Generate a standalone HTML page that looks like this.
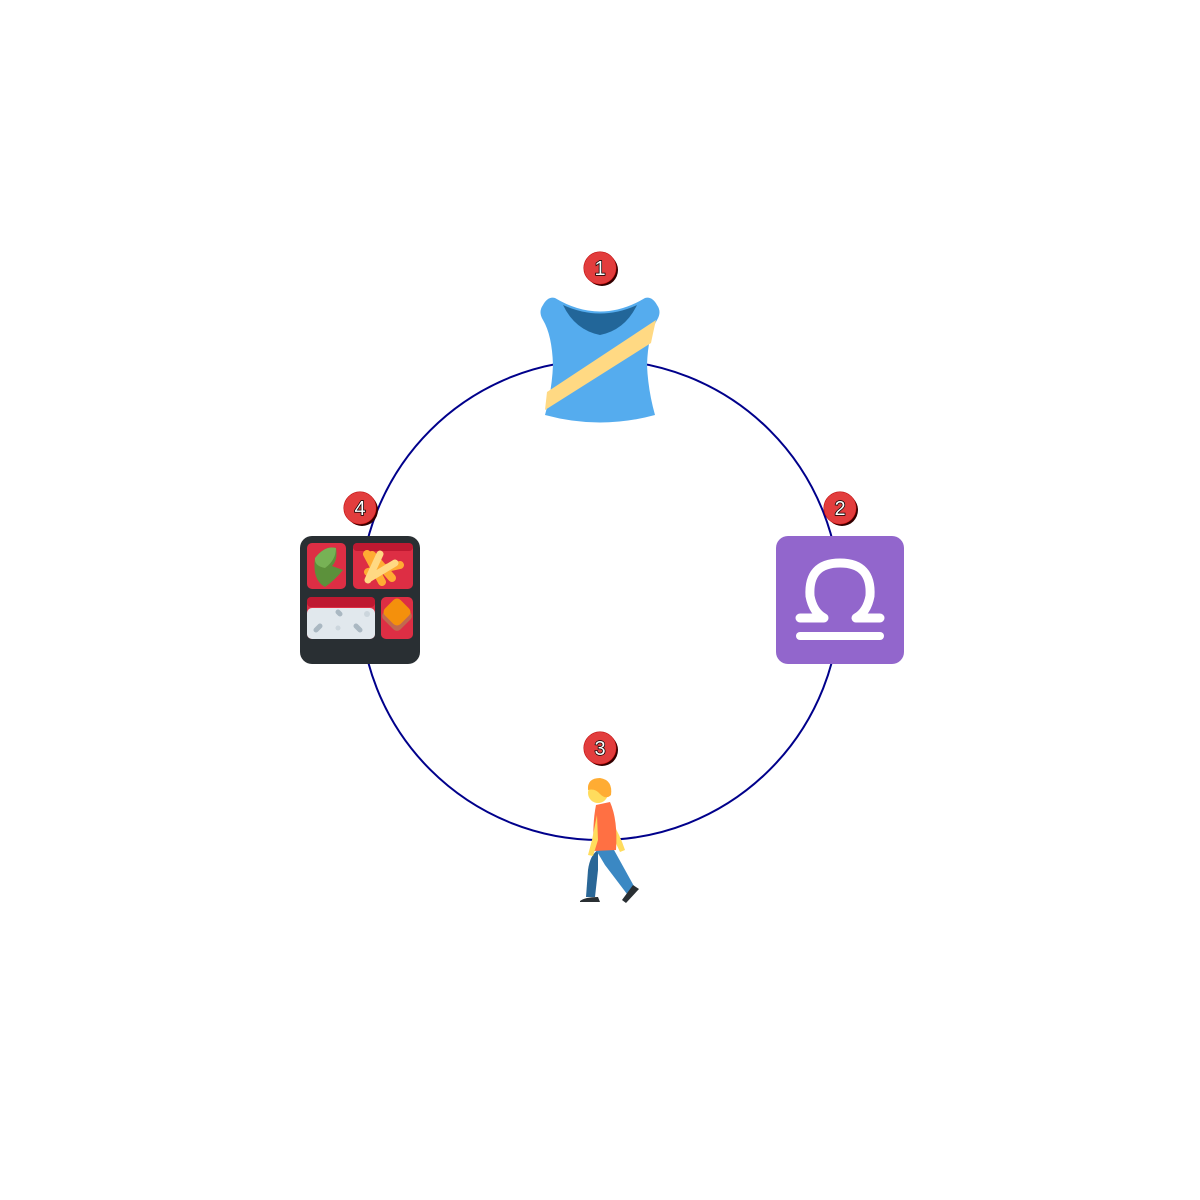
<!DOCTYPE html>
<html><head><style>html,body{margin:0;padding:0;background:#fff}svg{display:block}</style></head><body>
<svg width="1200" height="1200" viewBox="0 0 1200 1200" xmlns="http://www.w3.org/2000/svg">
<circle cx="600" cy="600" r="240" fill="none" stroke="#00008b" stroke-width="2"/>
<!-- shirt -->
<g>
<path d="M555 298 Q548 296 543 305 Q538 312 543 320 Q552 335 553 365 Q552 390 545 415 Q600 430 655 415 Q648 390 647 365 Q648 335 657 320 Q662 312 657 305 Q652 296 645 298 Q600 325 555 298Z" fill="#55acee"/>
<path d="M563 305 Q575 330 600 335 Q625 330 637 305 Q600 322 563 305Z" fill="#226699"/>
<path d="M547 392 L656 320 Q653 333 651 343 L545 410Z" fill="#ffd983"/>
</g>
<!-- libra -->
<rect x="776" y="536" width="128" height="128" rx="12" fill="#9266cc"/>
<path d="M800 618 L824 618 Q813 612 810 596 Q808 563 840 563 Q872 563 870 596 Q867 612 856 618 L880 618" fill="none" stroke="#fff" stroke-width="9" stroke-linejoin="round" stroke-linecap="round"/>
<path d="M800 636 L880 636" stroke="#fff" stroke-width="8" stroke-linecap="round"/>
<!-- bento -->
<rect x="300" y="536" width="120" height="128" rx="12" fill="#292f33"/>
<rect x="307" y="543" width="39" height="46" rx="5" fill="#dd2e44"/>
<rect x="353" y="543" width="60" height="46" rx="5" fill="#dd2e44"/>
<rect x="353" y="543" width="60" height="8" rx="4" fill="#be1931"/>
<rect x="307" y="597" width="68" height="42" rx="5" fill="#dd2e44"/>
<rect x="307" y="597" width="68" height="10" rx="4" fill="#be1931"/>
<rect x="381" y="597" width="32" height="42" rx="5" fill="#dd2e44"/>
<rect x="307" y="608" width="68" height="31" rx="5" fill="#e1e8ed"/>
<path d="M315 558 Q325 545 336 548 Q338 560 332 566 L343 570 Q335 580 325 587 Q312 580 315 558Z" fill="#5c913b"/>
<path d="M315 558 Q325 545 336 548 Q336 560 325 568 Q314 566 315 558Z" fill="#77b255"/>
<path d="M367 554 L382 582 M368 572 L400 565 M372 555 L392 578" stroke="#ffac33" stroke-width="8" stroke-linecap="round"/>
<path d="M380 554 L368 580 M370 578 L395 563" stroke="#ffd983" stroke-width="7" stroke-linecap="round"/>
<rect x="385" y="604" width="24" height="24" rx="5" transform="rotate(45 397 616)" fill="#c1694f"/>
<rect x="386" y="601" width="22" height="22" rx="5" transform="rotate(45 397 612)" fill="#f4900c"/>
<g stroke="#aab8c2" stroke-width="5" stroke-linecap="round"><path d="M316 630 L320 626 M338 612 L340 614 M356 626 L360 630"/></g>
<circle cx="338" cy="628" r="2.5" fill="#ccd6dd"/><circle cx="367" cy="614" r="3" fill="#ccd6dd"/>
<!-- walker -->
<g>
<path d="M598 870 L595 897 L586 897 L588 870 Q590 855 598 850Z" fill="#2a6797"/>
<path d="M596 850 L614 850 L635 888 L627 894 L605 865Z" fill="#3b88c3"/>
<path d="M580 901 Q585 897 598 897 L600 902 L580 902Z M622 900 L633 885 L639 889 L626 903Z" fill="#292f33"/>
<path d="M611 820 Q620 835 625 850 L620 852 L612 835Z" fill="#ffdc5d"/>
<path d="M596 805 L610 802 Q618 820 616 850 L594 851 Q592 825 596 805Z" fill="#ff7043"/>
<path d="M597 815 L592 840 L588 855 L593 856 L598 840Z" fill="#ffdc5d"/>
<circle cx="598" cy="793" r="10" fill="#ffdc5d"/>
<path d="M588 790 Q587 778 600 778 Q613 780 611 795 Q606 800 600 794 Q595 788 588 790Z" fill="#ffac33"/>
</g>
<!-- badges -->
<g font-family="Liberation Sans, sans-serif" font-size="20" text-anchor="middle" fill="#fff" stroke="#000" stroke-width="1.5" paint-order="stroke">
<g transform="translate(600,268)"><circle cx="2" cy="2" r="16" fill="#300" stroke="none"/><circle r="16" fill="#e23d3d" stroke="#b00" stroke-width="1"/><text y="7">1</text></g>
<g transform="translate(840,508)"><circle cx="2" cy="2" r="16" fill="#300" stroke="none"/><circle r="16" fill="#e23d3d" stroke="#b00" stroke-width="1"/><text y="7">2</text></g>
<g transform="translate(600,748)"><circle cx="2" cy="2" r="16" fill="#300" stroke="none"/><circle r="16" fill="#e23d3d" stroke="#b00" stroke-width="1"/><text y="7">3</text></g>
<g transform="translate(360,508)"><circle cx="2" cy="2" r="16" fill="#300" stroke="none"/><circle r="16" fill="#e23d3d" stroke="#b00" stroke-width="1"/><text y="7">4</text></g>
</g>
</svg>
</body></html>
